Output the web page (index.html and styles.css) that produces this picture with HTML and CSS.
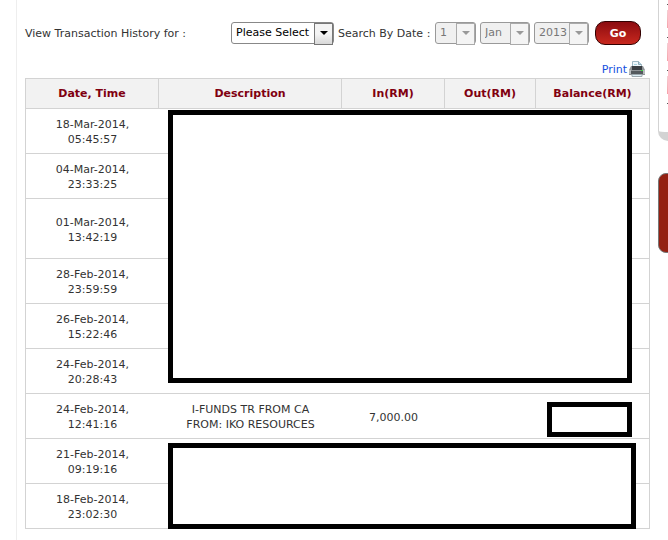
FILE: index.html
```html
<!DOCTYPE html>
<html lang="en">
<head>
    <meta charset="UTF-8">
    <meta name="viewport" content="width=device-width, initial-scale=1.0">
    <title>Transaction History</title>
    <link rel="stylesheet" href="styles.css">
</head>
<body>

<div class="page">
    <div class="main">
        <form class="filter">
            <label class="filterLabel" for="account">View Transaction History for :</label>
            <span class="selectBox account">
                <select id="account"><option>Please Select</option></select>
            </span>
            <label class="dateLabel" for="day">Search By Date :</label>
            <span class="selectBox off day">
                <select id="day" disabled><option>1</option></select>
            </span>
            <span class="selectBox off month">
                <select id="month" aria-label="Month" disabled><option>Jan</option></select>
            </span>
            <span class="selectBox off year">
                <select id="year" aria-label="Year" disabled><option>2013</option></select>
            </span>
            <button class="go" type="button">Go</button>
        </form>

        <a class="print" href="#">Print
            <svg width="16" height="16" viewBox="0 0 16 16">
                <path d="M3.5 6V.5h6l3 3V6z" fill="#eef7fb" stroke="#9fb9c5"/>
                <path d="M9.5.5v3h3" fill="#b9dcea" stroke="#8fa9b5"/>
                <path d="M5 3.500h3" stroke="#a9d3e0"/>
                <path d="M2 5h12l2 4v5H0V9z" fill="#8f9396"/>
                <path d="M3 5h10v4H3z" fill="#3a3f43"/>
                <path d="M2 10h12v3H2z" fill="#54595d"/>
                <path d="M0 9h2v4H0zM14 9h2v4h-2z" fill="#b8bcbe"/>
                <path d="M12 9h2v1h-2z" fill="#3fd545"/>
                <path d="M3 13.500h10v2H3z" fill="#dceef5" stroke="#9da8ae"/>
            </svg>
        </a>

        <div class="history">
            <table>
                <colgroup>
                    <col class="cDate"><col class="cDesc"><col class="cIn"><col class="cOut"><col class="cBal">
                </colgroup>
                <thead>
                    <tr><th>Date, Time</th><th>Description</th><th>In(RM)</th><th>Out(RM)</th><th>Balance(RM)</th></tr>
                </thead>
                <tbody>
                    <tr><td>18-Mar-2014,<br>05:45:57</td><td></td><td></td><td></td><td></td></tr>
                    <tr><td>04-Mar-2014,<br>23:33:25</td><td></td><td></td><td></td><td></td></tr>
                    <tr class="tall"><td>01-Mar-2014,<br>13:42:19</td><td></td><td></td><td></td><td></td></tr>
                    <tr><td>28-Feb-2014,<br>23:59:59</td><td></td><td></td><td></td><td></td></tr>
                    <tr><td>26-Feb-2014,<br>15:22:46</td><td></td><td></td><td></td><td></td></tr>
                    <tr><td>24-Feb-2014,<br>20:28:43</td><td></td><td></td><td></td><td></td></tr>
                    <tr><td>24-Feb-2014,<br>12:41:16</td><td>I-FUNDS TR FROM CA<br>FROM: IKO RESOURCES</td><td>7,000.00</td><td></td><td></td></tr>
                    <tr><td>21-Feb-2014,<br>09:19:16</td><td></td><td></td><td></td><td></td></tr>
                    <tr><td>18-Feb-2014,<br>23:02:30</td><td></td><td></td><td></td><td></td></tr>
                </tbody>
            </table>
            <!-- boxes over the private rows -->
            <div class="cover coverTop"></div>
            <div class="cover coverBalance"></div>
            <div class="cover coverBottom"></div>
        </div>
    </div>

    <div class="side">
        <div class="sideCard">
            <div class="sideItem"></div>
            <div class="sideItem"></div>
            <div class="sideItem"></div>
        </div>
        <div class="sideBanner"></div>
    </div>
</div>

</body>
</html>
```
FILE: styles.css
```css
* {margin:0;padding:0;box-sizing:border-box;}
body {
    background: #fff;
    color: #333;
    font: 11px/15px "DejaVu Sans", Verdana, sans-serif;
    overflow: hidden;
}
.page {
    display: flex;
    min-height: 100vh;
    padding-left: 16px;
}
.main {
    flex: 1;
    padding: 21px 8px 0 8px;
    border-left: 1px solid #eee;
}

/* filter */
.filter {
    display: flex;
    align-items: center;
    gap: 4px;
    height: 24px;
    white-space: nowrap;
}
.filterLabel {
    width: 202px;
}
.dateLabel {
    width: 93px;
}
.selectBox {
    position: relative;
    height: 22px;
}
.selectBox select {
    appearance: none;
    width: 100%;
    height: 22px;
    padding: 0 4px 1px;
    border: 1px solid #888;
    border-radius: 3px;
    background: #fff;
    color: #000;
    font: 11px "DejaVu Sans", Verdana, sans-serif;
}
.selectBox::before {
    content: "";
    position: absolute;
    top: 1px;
    right: 1px;
    width: 17px;
    height: 20px;
    border: 1px solid #777;
    background: linear-gradient(#f4f4f4 50%, #d8d8d8);
    pointer-events: none;
}
.selectBox::after {
    content: "";
    position: absolute;
    top: 9px;
    right: 6px;
    border: 4px solid transparent;
    border-top-color: #000;
    border-bottom: 0;
    pointer-events: none;
}
.selectBox.off select {
    border-color: #999;
    background: #f0f0f0;
    color: #777;
    opacity: 1;
}
.off::before {
    border-color: #aaa;
    background: #f4f4f4;
}
.off::after {
    border-top-color: #999;
}
.account {width: 103px;}
.day {width: 41px;}
.month {width: 50px;}
.year {width: 55px;}
.go {
    width: 46px;
    height: 24px;
    margin-left: 2px;
    border: 1px solid #300;
    border-radius: 10px;
    background: linear-gradient(#8c0c10, #c8281e);
    color: #fff;
    font: bold 11px "DejaVu Sans", Verdana, sans-serif;
    cursor: pointer;
}

.print {
    display: flex;
    justify-content: flex-end;
    align-items: center;
    gap: 2px;
    margin: 16px 5px 1px 0;
    color: #1450e0;
    text-decoration: none;
}

/* table */
.history {
    position: relative;
}
table {
    width: 100%;
    border: 1px solid #d3d3d3;
    border-top: 0;
    border-spacing: 0;
    table-layout: fixed;
    text-align: center;
}
.cDate {width: 133px;}
.cDesc {width: 183px;}
.cIn {width: 103px;}
.cOut {width: 91px;}
th {
    height: 31px;
    border: 1px solid #d3d3d3;
    border-width: 1px 1px 1px 0;
    background: #f2f2f2;
    color: #800010;
}
th:last-child {
    border-right: 0;
}
td {
    height: 45px;
    padding-top: 2px;
    border-bottom: 1px solid #d3d3d3;
}
tr:last-child td {
    height: 44px;
    border-bottom: 0;
}
.tall td {
    height: 60px;
}
.cover {
    position: absolute;
    border: 5px solid #000;
    background: #fff;
}
.coverTop {
    top: 32px;
    left: 143px;
    right: 18px;
    height: 273px;
}
.coverBalance {
    top: 324px;
    right: 18px;
    width: 85px;
    height: 35px;
}
.coverBottom {
    top: 365px;
    left: 143px;
    right: 14px;
    height: 86px;
}

/* right column, runs off the window */
.side {
    width: 10px;
    overflow: hidden;
}
.sideCard {
    width: 200px;
    height: 141px;
    padding: 4px 0 0 8px;
    border: 1px solid #d3d3d3;
    border-width: 0 1px 9px 1px;
    border-radius: 0 0 10px 10px;
}
.sideItem {
    height: 33px;
    padding-top: 5px;
    border-top: 1px solid #555;
}
.sideItem:last-child {
    height: 34px;
    border-bottom: 1px solid #555;
}
.sideItem::before {
    content: "";
    display: block;
    height: 18px;
    background: linear-gradient(#f4d0d4, #f6a0a8);
}
.sideBanner {
    width: 200px;
    height: 80px;
    margin-top: 32px;
    border: 1px solid #777;
    border-radius: 8px;
    background: #942012;
}
```
